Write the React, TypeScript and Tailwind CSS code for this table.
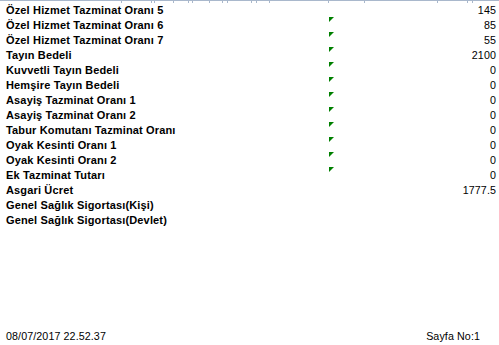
const rows: { label: string; value?: string; flag?: boolean }[] = [
  { label: 'Özel Hizmet Tazminat Oranı 5', value: '145' },
  { label: 'Özel Hizmet Tazminat Oranı 6', value: '85', flag: true },
  { label: 'Özel Hizmet Tazminat Oranı 7', value: '55', flag: true },
  { label: 'Tayın Bedeli', value: '2100', flag: true },
  { label: 'Kuvvetli Tayın Bedeli', value: '0', flag: true },
  { label: 'Hemşire Tayın Bedeli', value: '0', flag: true },
  { label: 'Asayiş Tazminat Oranı 1', value: '0', flag: true },
  { label: 'Asayiş Tazminat Oranı 2', value: '0', flag: true },
  { label: 'Tabur Komutanı Tazminat Oranı', value: '0', flag: true },
  { label: 'Oyak Kesinti Oranı 1', value: '0', flag: true },
  { label: 'Oyak Kesinti Oranı 2', value: '0', flag: true },
  { label: 'Ek Tazminat Tutarı', value: '0', flag: true },
  { label: 'Asgari Ücret', value: '1777.5' },
  { label: 'Genel Sağlık Sigortası(Kişi)' },
  { label: 'Genel Sağlık Sigortası(Devlet)' },
];

// column dividers of the previous page section, cut off at the top edge
const ticks = [122, 30, 3, 19, 15, 4, 17, 13, 5, 24, 5, 13, 59, 36, 73, 30, 5];

function Flag() {
  return (
    <svg width="5" height="5" viewBox="0 0 5 5" className="absolute left-0 top-[-1px]">
      <polygon points="0,0 5,0 0,5" fill="#008000" />
    </svg>
  );
}

export default function App() {
  return (
    <div className="flex h-[345px] w-[499px] flex-col bg-white text-[10.7px] text-black" style={{ fontFamily: '"Liberation Sans", Arial, sans-serif' }}>
      <div className="flex h-[3px] border-t border-[#a9b8cc]">
        {ticks.map((w, i) => (
          <div key={i} className="h-[2px] shrink-0 border-r border-[#a9b8cc]" style={{ width: w }} />
        ))}
      </div>

      <div className="flex flex-col">
        {rows.map((r) => (
          <div key={r.label} className="flex h-[15px] items-center leading-[15px]">
            <div className="w-[329px] shrink-0 pl-[6px] text-[11px] font-bold tracking-[0.15px]">{r.label}</div>
            <div className="relative flex h-full flex-1 justify-end pr-[3px] tracking-[0.1px]">
              {r.flag && <Flag />}
              {r.value}
            </div>
          </div>
        ))}
      </div>

      <div className="mt-auto flex h-[15px] items-center justify-between pb-[2px] pl-[6px] pr-[19px] leading-[15px] tracking-[0.1px]">
        <span>08/07/2017 22.52.37</span>
        <span>Sayfa No:1</span>
      </div>
    </div>
  );
}
